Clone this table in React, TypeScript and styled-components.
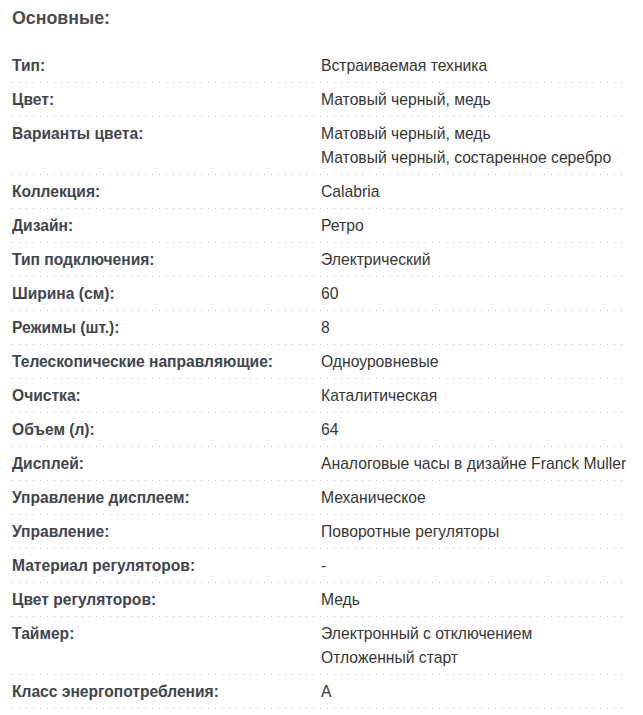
import React from 'react';
import styled, { createGlobalStyle } from 'styled-components';

const GlobalStyle = createGlobalStyle`
  html, body {
    margin: 0;
    padding: 0;
    background: #fff;
  }
  body {
    font-family: "Liberation Sans", Arial, sans-serif;
  }
`;

const Wrapper = styled.section`
  padding: 6px 15px 0 12px;
`;

const Heading = styled.h2`
  margin: 0 0 19px;
  font-size: 17.8px;
  line-height: 24px;
  font-weight: 700;
  color: #474c52;
`;

const List = styled.dl`
  margin: 0;
`;

const Row = styled.div`
  display: grid;
  grid-template-columns: 309px 1fr;
  padding: 5px 0 4px;
  border-bottom: 1px solid transparent;
  background-image: linear-gradient(to right, #c4c4c4 1px, transparent 1px);
  background-size: 7px 1px;
  background-repeat: repeat-x;
  background-position: 0 100%;
  background-origin: border-box;
`;

const Label = styled.dt`
  margin: 0;
  font-size: 15.6px;
  line-height: 24px;
  font-weight: 700;
  color: #41464c;
  white-space: nowrap;
`;

const Value = styled.dd`
  margin: 0;
  font-size: 15.7px;
  line-height: 24px;
  color: #363636;
  white-space: nowrap;
`;

const specs: [string, string[]][] = [
  ['Тип:', ['Встраиваемая техника']],
  ['Цвет:', ['Матовый черный, медь']],
  ['Варианты цвета:', ['Матовый черный, медь', 'Матовый черный, состаренное серебро']],
  ['Коллекция:', ['Calabria']],
  ['Дизайн:', ['Ретро']],
  ['Тип подключения:', ['Электрический']],
  ['Ширина (см):', ['60']],
  ['Режимы (шт.):', ['8']],
  ['Телескопические направляющие:', ['Одноуровневые']],
  ['Очистка:', ['Каталитическая']],
  ['Объем (л):', ['64']],
  ['Дисплей:', ['Аналоговые часы в дизайне Franck Muller']],
  ['Управление дисплеем:', ['Механическое']],
  ['Управление:', ['Поворотные регуляторы']],
  ['Материал регуляторов:', ['-']],
  ['Цвет регуляторов:', ['Медь']],
  ['Таймер:', ['Электронный с отключением', 'Отложенный старт']],
  ['Класс энергопотребления:', ['A']],
];

const App: React.FC = () => (
  <>
    <GlobalStyle />
    <Wrapper>
      <Heading>Основные:</Heading>
      <List>
        {specs.map(([label, values]) => (
          <Row key={label}>
            <Label>{label}</Label>
            <Value>
              {values.map(v => <div key={v}>{v}</div>)}
            </Value>
          </Row>
        ))}
      </List>
    </Wrapper>
  </>
);

export default App;
